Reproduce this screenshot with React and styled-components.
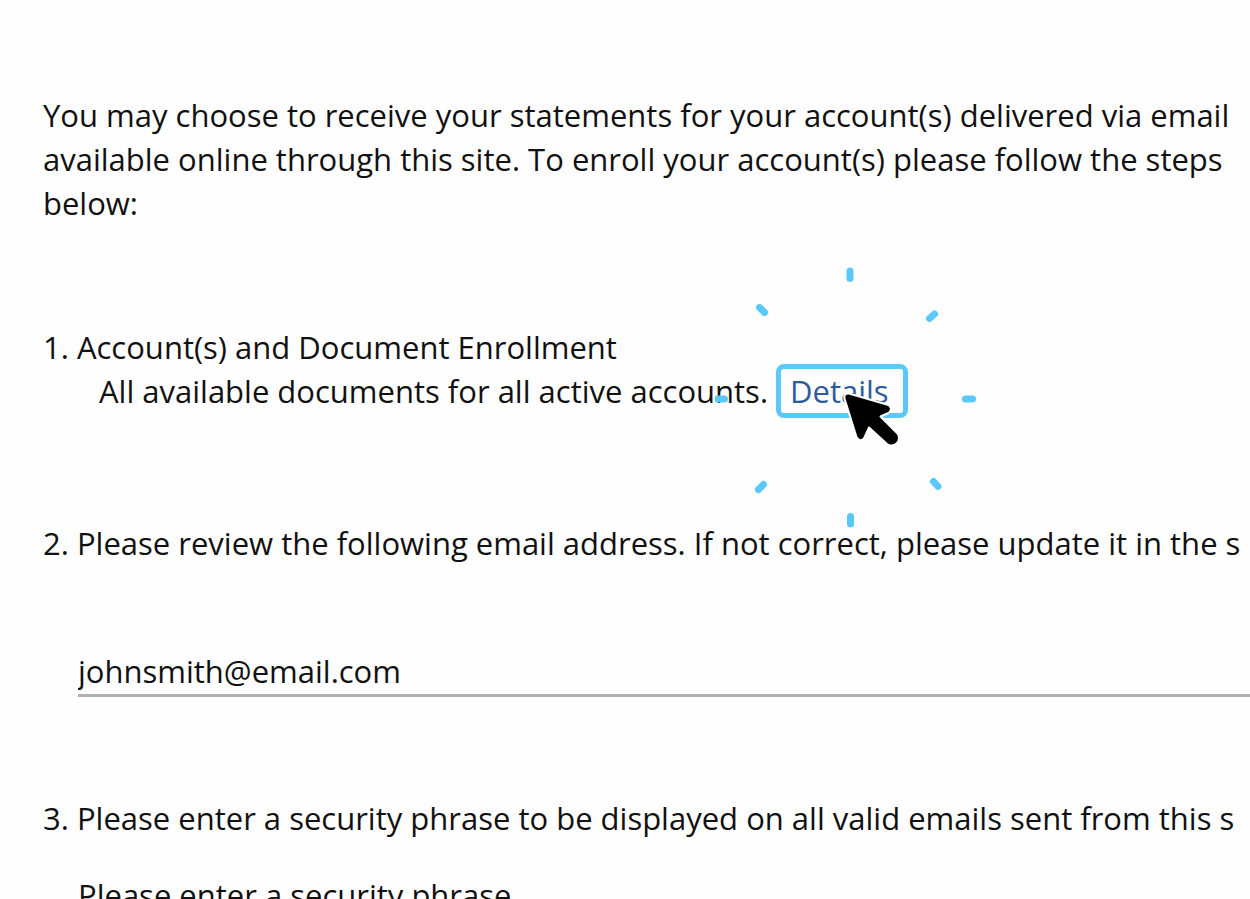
import { useState } from "react";
import styled, { createGlobalStyle } from "styled-components";

const App = () => {
  const [email, setEmail] = useState("johnsmith@email.com");
  const [phrase, setPhrase] = useState("");

  return (
    <>
      <GlobalStyle />
      <Page>
        <Intro>
          You may choose to receive your statements for your account(s) delivered via email
          available online through this site. To enroll your account(s) please follow the steps
          below:
        </Intro>

        <Step>
          <StepTitle>1. Account(s) and Document Enrollment</StepTitle>
          <StepDetail>
            All available documents for all active accounts.
            <DetailsLink href="#details">
              Details
              <ClickPointer />
            </DetailsLink>
          </StepDetail>
        </Step>

        <Step>
          <StepTitle as="label" htmlFor="email">
            2. Please review the following email address. If not correct, please update it in the s
          </StepTitle>
          <Field
            id="email"
            type="email"
            value={email}
            onChange={(e) => setEmail(e.target.value)}
            $gap="84px"
          />
        </Step>

        <Step>
          <StepTitle as="label" htmlFor="phrase">
            3. Please enter a security phrase to be displayed on all valid emails sent from this s
          </StepTitle>
          <Field
            id="phrase"
            type="text"
            placeholder="Please enter a security phrase"
            value={phrase}
            onChange={(e) => setPhrase(e.target.value)}
            $gap="33px"
          />
        </Step>
      </Page>
    </>
  );
};

const ClickPointer = () => (
  <PointerSvg viewBox="0 0 270 270" aria-hidden="true">
    <g stroke="#5bc8fa" strokeWidth="7" strokeLinecap="round">
      <path d="M135 8V15.500" />
      <path d="M44.500 44.500L49.500 49.500" />
      <path d="M219.500 51L214.500 55.500" />
      <path d="M2.500 136H9.500" />
      <path d="M250.500 136H257.500" />
      <path d="M48.500 221.500L43.500 226.500" />
      <path d="M218.500 218.500L223 223.500" />
      <path d="M135.500 253.500V261" />
    </g>
    <path
      d="M129.500 135.500L141.500 174Q145.500 180 149.500 174.500L154 164.500L172 181A7.500 7.500 0 0 0 182.500 170.500L165.500 153.500L173.500 150Q178.500 146 173.500 142L134 130.500Q128.500 130 129.500 135.500Z"
      fill="#000"
      stroke="#fff"
      strokeWidth="2"
      strokeLinejoin="round"
    />
  </PointerSvg>
);

const GlobalStyle = createGlobalStyle`
  body {
    margin: 0;
    overflow: hidden;
    background-color: #fefefe;
  }
`

const Page = styled.main`
  box-sizing: border-box;
  height: 100vh;
  overflow: hidden;
  padding: 93px 0 0 43px;
  display: flex;
  flex-direction: column;
  font-family: "Open Sans", sans-serif;
  font-size: 31px;
  line-height: 44px;
  color: #111;
`

const Intro = styled.p`
  margin: 0 0 100px;
`

const Step = styled.section`
  display: flex;
  flex-direction: column;
  margin-bottom: 108px;

  & + & + & {
    margin-top: -9px;
  }
`

const StepTitle = styled.div`
  white-space: nowrap;
`

const StepDetail = styled.div`
  display: flex;
  align-items: center;
  gap: 8px;
  height: 44px;
  padding-left: 56px;
  white-space: nowrap;
`

const DetailsLink = styled.a`
  position: relative;
  border: 5px solid #5bc8fa;
  border-radius: 8px;
  padding: 0 14px 0 9px;
  background-color: #fefefe;
  color: #2f5b9d;
  text-decoration: none;
`

const PointerSvg = styled.svg`
  position: absolute;
  top: -106px;
  left: -66px;
  width: 270px;
  height: 270px;
  fill: none;
  pointer-events: none;
`

const Field = styled.input`
  margin: ${(props) => props.$gap} 0 0 35px;
  padding: 0 0 1px;
  border: 0;
  border-bottom: 3px solid #b0b0b0;
  border-radius: 0;
  outline: none;
  background: transparent;
  font: inherit;
  color: inherit;

  &::placeholder {
    color: inherit;
    opacity: 1;
  }
`

export default App;
